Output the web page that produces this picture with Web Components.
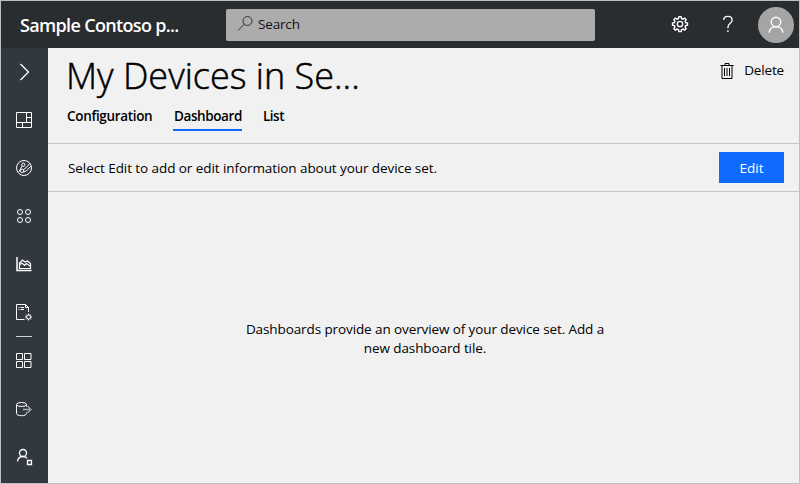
<!DOCTYPE html>
<html lang="en">
<head>
<meta charset="utf-8">
<title>My Devices</title>
<style>
html,body{margin:0;height:100%;overflow:hidden}
body{font-family:"Open Sans","Noto Sans",sans-serif;font-size:13.5px;color:#000}
</style>
</head>
<body>
<device-app>
  <app-header slot="header"></app-header>
  <side-nav slot="nav"></side-nav>
  <page-heading slot="main">My Devices in Se...
    <command-button slot="command" icon="trash">Delete</command-button>
    <tab-item slot="tabs" style="letter-spacing:-.33px;width:85px">Configuration</tab-item>
    <tab-item slot="tabs" active style="letter-spacing:-.4px;width:69px;text-indent:1px">Dashboard</tab-item>
    <tab-item slot="tabs" style="letter-spacing:-.5px;width:24px">List</tab-item>
  </page-heading>
  <info-bar slot="main">Select Edit to add or edit information about your device set.
    <primary-button slot="action">Edit</primary-button>
  </info-bar>
  <empty-state slot="main">Dashboards provide an overview of your device set. Add a<br>new dashboard tile.</empty-state>
</device-app>
<script>
const icons = {
  expand: '<path stroke-width="1.3" d="M8.500 4l8 8-8 8"/>',
  dashboard: '<path d="M4.5 4.5h15v15h-15zM14.5 4.5v10M4.5 14.5h15M14.5 9.5h5M10.5 14.5v5"/>',
  gauge: '<circle cx="12" cy="12" r="7.5"/><circle cx="11.300" cy="8.700" r="1.600"/><circle cx="10" cy="14.800" r="1.700"/><path d="M10.200 10L6.800 15.800M11.400 13.700l2.600-1.900 4-4.600M11.500 16.200l3-1.400 4.300-4.600"/>',
  groups: '<circle cx="8" cy="8" r="2.5"/><circle cx="16" cy="8" r="2.5"/><circle cx="8" cy="16" r="2.5"/><circle cx="16" cy="16" r="2.5"/>',
  chart: '<path d="M5 5v13.500h14.500" stroke-width="1.500"/><path stroke-width="1.200" d="M7.500 16.500V11l3-3 2.500 2 2.500-1 3 2.500v5zM8 12.500l2-1.500 2.500 2.500 2-2 4 3"/>',
  jobs: '<path d="M12.5 19.5h-8v-15h9l3 3v4.5M13.5 4.5v3h3M6.5 7.5h1M8.5 7.5h3.5M6.5 9.5h1M8.5 9.5h3.5"/><circle cx="16.5" cy="17" r="2"/><path d="M16.5 13.5v1.5M16.5 19v1.5M13 17h1.5M18.500 17H20M14 14.500l1.1 1.1M17.900 18.400l1.100 1.100M14 19.500l1.100-1.100M17.900 15.600l1.100-1.100"/>',
  tiles: '<path d="M4.500 4.500h6v6h-6zM12.500 4.500h6.500v6h-6.500zM4.500 12.500h6v6h-6zM12.500 12.500h6.500v6h-6.500z"/>',
  exportData: '<ellipse cx="9.500" cy="7.500" rx="5" ry="2"/><path d="M4.500 7.500v9c0 1.300 2.200 2.200 5 2.200s5-.9 5-2.200v-1M14.500 7.500v2"/><path d="M11 12.500h7" stroke-width="1.500" stroke="#aab0b5"/><path d="M15.500 9l3.500 3.500-3.500 3.500"/>',
  userAdmin: '<circle cx="11" cy="8" r="3.500" stroke-width="1.300"/><path d="M5.500 16.500c.3-3 2.300-5 5.500-5 1.700 0 3 .6 4 1.700" stroke-width="1.300"/><path d="M15.500 15.500h4v4h-4z" stroke-width="1.300"/>',
  search: '<circle cx="14.500" cy="9" r="4.500"/><path d="M11.300 12.200L5 18.500"/>',
  gear: '<circle cx="12" cy="12" r="2.700" stroke-width="1.300"/><path stroke-width="1.400" d="M10.900 4.600h2.200l.4 1.900 1.400.6 1.700-1 1.500 1.500-1 1.700.5 1.300 1.900.4v2.200l-1.900.4-.5 1.300 1 1.700-1.500 1.500-1.700-1-1.400.6-.4 1.900h-2.200l-.4-1.900-1.400-.6-1.700 1-1.500-1.500 1-1.700-.5-1.300-1.900-.4V11l1.900-.4.5-1.300-1-1.700 1.500-1.500 1.700 1 1.400-.6z"/>',
  help: '<path stroke-width="1.300" d="M7.700 8c0-2.300 1.800-3.700 4.200-3.700s4.200 1.400 4.200 3.600c0 3.500-4.200 3.300-4.200 7.600v.8M11.900 18.300v1.600"/>',
  user: '<circle cx="12" cy="9" r="4.700" stroke-width="1.400"/><path d="M5.200 19.800c0-3.800 2.800-6.100 6.800-6.100s6.800 2.300 6.800 6.100" stroke-width="1.400"/>',
  trash: '<path d="M5.500 6.500h13M10 6.500v-2h4v2M7 6.500v13h10v-13M9.500 9v8M12 9v8M14.500 9v8"/>'
};
function define(name, html, after) {
  const template = document.createElement('template');
  template.innerHTML = html;
  customElements.define(name, class extends HTMLElement {
    connectedCallback() {
      if (this.shadowRoot) return;
      this.attachShadow({mode: 'open'}).append(template.content.cloneNode(true));
      if (after) after(this);
    }
  });
}
define('line-icon', `<style>:host{display:block;width:24px;height:24px;flex:none}svg{display:block;fill:none;stroke:currentColor;stroke-width:1}</style><svg width="24" height="24" viewBox="0 0 24 24"></svg>`,
  el => el.shadowRoot.querySelector('svg').innerHTML = icons[el.getAttribute('name')]);

define('device-app', `<style>
:host{display:grid;box-sizing:border-box;width:100vw;height:100vh;border:1px solid #c0c0c0;grid-template:47px 1fr/47px 1fr;background:#f1f1f1}
.top{grid-column:1/-1;display:grid}.nav{display:grid}
main{display:flex;flex-direction:column;min-width:0}
</style><div class="top"><slot name="header"></slot></div><div class="nav"><slot name="nav"></slot></div><main><slot name="main"></slot></main>`);

define('app-header', `<style>
:host{display:flex;align-items:center;background:#2a2d30;color:#fff;padding:0 5px 0 19px}
h1{margin:0;font-size:18px;line-height:24px;font-weight:600;letter-spacing:-.66px;width:206px;white-space:nowrap}
search-box{width:369px}
.actions{margin-left:auto;display:flex;align-items:center;gap:23px}
line-icon[name=gear],line-icon[name=help]{margin-bottom:2px}
line-icon[name=gear]{margin-right:1px}
.face{width:36px;height:36px;border-radius:50%;background:#a5a5a5;display:grid;place-items:center;margin-left:-5px}
</style><h1>Sample Contoso p...</h1><search-box></search-box>
<div class="actions"><line-icon name="gear"></line-icon><line-icon name="help"></line-icon><div class="face"><line-icon name="user"></line-icon></div></div>`);

define('search-box', `<style>
:host{display:flex;align-items:center;box-sizing:border-box;height:32px;background:#acacac;border-radius:2px;color:#111;padding:0 0 2px 7px;letter-spacing:-.16px}
line-icon{margin:0 1px 0 0;color:#333}
</style><line-icon name="search"></line-icon><span>Search</span>`);

define('side-nav', `<style>
:host{display:flex;flex-direction:column;align-items:flex-start;background:#313840;color:#fff;padding-left:11px}
line-icon{padding:12px 0}
line-icon[name=jobs]{padding-bottom:12px}
i{display:block;width:16px;height:1px;margin-left:4px;background:#cfd1d3}
</style>
<line-icon name="expand"></line-icon><line-icon name="dashboard"></line-icon><line-icon name="gauge"></line-icon><line-icon name="groups"></line-icon><line-icon name="chart"></line-icon><line-icon name="jobs"></line-icon><i></i><line-icon name="tiles"></line-icon><line-icon name="exportData"></line-icon><line-icon name="userAdmin"></line-icon>`);

define('page-heading', `<style>
:host{display:block;box-sizing:border-box;height:96px;border-bottom:1px solid #c6c6c6;padding:0 15px 0 19px}
.row{display:flex;justify-content:space-between;align-items:flex-start;height:56px}
h2{margin:1px 0 0 -1px;font-size:36px;line-height:54px;font-weight:300;white-space:nowrap;-webkit-text-stroke:.5px #000}
nav{display:flex;gap:22px}
</style><div class="row"><h2><slot></slot></h2><slot name="command"></slot></div><nav><slot name="tabs"></slot></nav>`);

define('command-button', `<style>
:host{display:flex;align-items:center;gap:5px;height:24px;margin-top:11px;letter-spacing:-.15px}
span{padding-bottom:2px}
</style><line-icon name="trash"></line-icon><span><slot></slot></span>`,
  el => el.shadowRoot.querySelector('line-icon').setAttribute('name', el.getAttribute('icon')));

define('tab-item', `<style>
:host{display:block;box-sizing:border-box;height:27px;line-height:25px;font-weight:600;white-space:nowrap;border-bottom:2px solid transparent}
:host([active]){border-color:#0f6bff;margin:0 -1px}
</style><slot></slot>`);

define('info-bar', `<style>
:host{display:flex;align-items:center;justify-content:space-between;box-sizing:border-box;height:48px;border-bottom:1px solid #c6c6c6;padding:0 15px 0 20px;letter-spacing:-.075px}
</style><span><slot></slot></span><slot name="action"></slot>`);

define('primary-button', `<style>
:host{display:grid;place-items:center;width:65px;height:31px;background:#0f6bff;color:#fff;letter-spacing:-.05px}
</style><span><slot></slot></span>`);

define('empty-state', `<style>
:host{display:grid;flex:1;place-items:center;text-align:center;line-height:19px;letter-spacing:-.1px;padding:3px 0 0 3px}
</style><p><slot></slot></p>`);
</script>
</body>
</html>
